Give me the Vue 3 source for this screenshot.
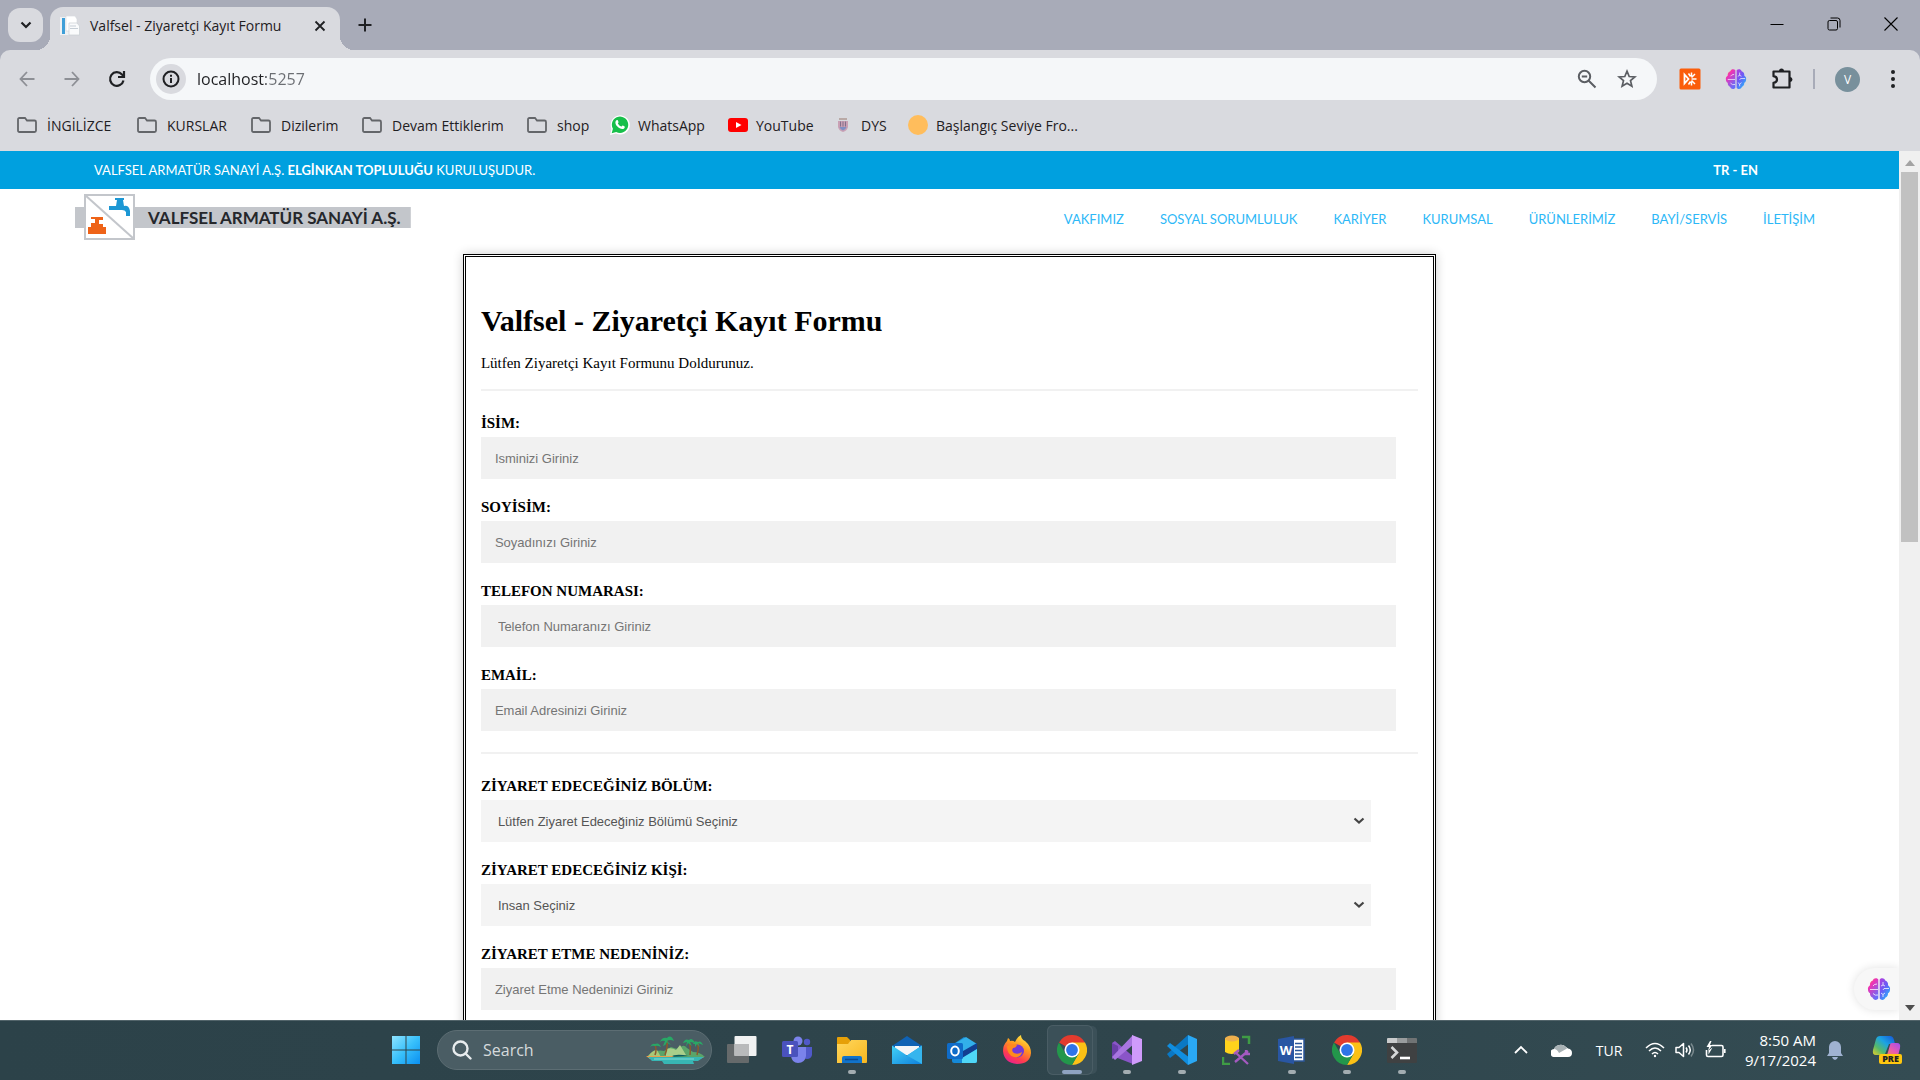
<script setup>
import { ref } from 'vue'

const url = ref('localhost:5257')

const bookmarks = [
  { label: 'İNGİLİZCE', icon: 'folder', width: 120 },
  { label: 'KURSLAR', icon: 'folder', width: 114 },
  { label: 'Dizilerim', icon: 'folder', width: 111 },
  { label: 'Devam Ettiklerim', icon: 'folder', width: 165 },
  { label: 'shop', icon: 'folder', width: 83 },
  { label: 'WhatsApp', icon: 'whatsapp', width: 118 },
  { label: 'YouTube', icon: 'youtube', width: 105 },
  { label: 'DYS', icon: 'crest', width: 75 },
  { label: 'Başlangıç Seviye Fro...', icon: 'dot', width: 180 },
]

const nav = ['VAKFIMIZ', 'SOSYAL SORUMLULUK', 'KARİYER', 'KURUMSAL', 'ÜRÜNLERİMİZ', 'BAYİ/SERVİS', 'İLETİŞİM']

const personal = [
  { id: 'isim', label: 'İSİM:', hint: 'Isminizi Giriniz', type: 'text' },
  { id: 'soyisim', label: 'SOYİSİM:', hint: 'Soyadınızı Giriniz', type: 'text' },
  { id: 'telefon', label: 'TELEFON NUMARASI:', hint: 'Telefon Numaranızı Giriniz', type: 'tel' },
  { id: 'email', label: 'EMAİL:', hint: 'Email Adresinizi Giriniz', type: 'email' },
]

const choices = [
  { id: 'bolum', label: 'ZİYARET EDECEĞİNİZ BÖLÜM:', hint: 'Lütfen Ziyaret Edeceğiniz Bölümü Seçiniz' },
  { id: 'kisi', label: 'ZİYARET EDECEĞİNİZ KİŞİ:', hint: 'Insan Seçiniz' },
]

const apps = [
  { name: 'Task view', icon: 'taskview' },
  { name: 'Teams', icon: 'teams' },
  { name: 'File Explorer', icon: 'explorer', open: true },
  { name: 'Mail', icon: 'mail' },
  { name: 'Outlook', icon: 'outlook' },
  { name: 'Firefox', icon: 'firefox' },
  { name: 'Chrome', icon: 'chrome', open: true, active: true },
  { name: 'Visual Studio', icon: 'vs', open: true },
  { name: 'Visual Studio Code', icon: 'vscode', open: true },
  { name: 'SQL Server Management Studio', icon: 'ssms' },
  { name: 'Word', icon: 'word', open: true },
  { name: 'Chrome 2', icon: 'chrome', open: true },
  { name: 'Terminal', icon: 'terminal', open: true },
]
</script>

<template>
  <div class="desktop">
    <svg class="sprite" aria-hidden="true">
      <defs>
        <linearGradient id="brainL" x1="0" y1="0" x2="0.6" y2="1">
          <stop offset="0" stop-color="#fb9a28" /><stop offset="0.35" stop-color="#f032b4" /><stop offset="1" stop-color="#6a6cf8" />
        </linearGradient>
        <linearGradient id="brainR" x1="0" y1="0" x2="0.7" y2="1">
          <stop offset="0" stop-color="#b63ddc" /><stop offset="0.5" stop-color="#6a5cf6" /><stop offset="1" stop-color="#27b4fb" />
        </linearGradient>
        <linearGradient id="win" x1="0" y1="0" x2="1" y2="1">
          <stop offset="0" stop-color="#8fe4ff" /><stop offset="0.5" stop-color="#38c0fb" /><stop offset="1" stop-color="#0a8ff0" />
        </linearGradient>
        <linearGradient id="folderG" x1="0" y1="0" x2="1" y2="1">
          <stop offset="0" stop-color="#ffd75e" /><stop offset="1" stop-color="#f9b71e" />
        </linearGradient>
        <linearGradient id="fire" x1="0.8" y1="0" x2="0.3" y2="1">
          <stop offset="0" stop-color="#fff04a" /><stop offset="0.4" stop-color="#ff9a1f" /><stop offset="0.75" stop-color="#ff3d4f" /><stop offset="1" stop-color="#e8208f" />
        </linearGradient>
        <linearGradient id="copA" x1="1" y1="0" x2="0" y2="1">
          <stop offset="0" stop-color="#1551d8" /><stop offset="0.4" stop-color="#1ba3e4" /><stop offset="0.7" stop-color="#55b96a" /><stop offset="1" stop-color="#e8cf2a" />
        </linearGradient>
        <linearGradient id="copB" x1="1" y1="0" x2="0" y2="1">
          <stop offset="0" stop-color="#a04df0" /><stop offset="0.5" stop-color="#e85bb0" /><stop offset="1" stop-color="#ff8a50" />
        </linearGradient>
        <linearGradient id="mailG" x1="0" y1="0" x2="1" y2="1">
          <stop offset="0" stop-color="#42d2f7" /><stop offset="1" stop-color="#0f80dc" />
        </linearGradient>
      </defs>
      <symbol id="brain" viewBox="0 0 24 24">
        <path fill="url(#brainL)" d="M11.3 2.5C10 .8 6.500.9 5.800 3.600 3.500 4.200 2.600 6.500 3 8.300 1.300 9.500.600 11 1 12.700 1 14.500 2 15.500 3 16.200 2.800 18.500 4 20 5.500 20.500 6.500 23.500 10 23.500 11.300 21.500Z" />
        <path fill="url(#brainR)" d="M12.700 2.500C14 .8 17.500.9 18.200 3.600 20.500 4.200 21.400 6.500 21 8.300 22.700 9.500 23.400 11 23 12.700 23 14.500 22 15.500 21 16.200 21.200 18.500 20 20 18.500 20.500 17.500 23.500 14 23.500 12.700 21.500Z" />
        <path fill="none" stroke="#fff" stroke-opacity=".75" stroke-width="1" d="M6 9q1-2 4-2M3 12.500h8M6 16.500q2 2.500 5 1.500M16 5v3l-2 1M16 8l2 1M22 11.500h-5l-1 1.500M14 16l2 1.500 2-1.500M16 17.500v2.500" />
      </symbol>
    </svg>

    <!-- Browser frame -->
    <header class="browser">
      <div class="tabstrip">
        <button class="tabsearch" aria-label="Search tabs">
          <svg width="14" height="14" viewBox="0 0 14 14"><path d="M2.500 4.500 7 9l4.500-4.500" fill="none" stroke="#1f2023" stroke-width="2.200" /></svg>
        </button>
        <div class="tab">
          <svg width="20" height="20" viewBox="0 0 20 20">
            <path d="M0 1h14v18H0z" fill="#eef1f4" /><path d="M2 2h3v16H2z" fill="#3f9fd8" />
            <path d="M6 0h9l2 3v12H6z" fill="#fff" stroke="#d3d7db" stroke-width=".6" />
            <path d="M9 7h8l2.500 3v9H9z" fill="#fafbfc" stroke="#c9ced3" stroke-width=".7" />
            <path d="M10 10h6M10 12.500h8" stroke="#b9c3cb" stroke-width=".8" />
          </svg>
          <span class="tabtitle">Valfsel - Ziyaretçi Kayıt Formu</span>
          <button class="icon tabclose" aria-label="Close tab">
            <svg width="12" height="12" viewBox="0 0 12 12"><path d="m1.500 1.500 9 9m0-9-9 9" stroke="#1f2023" stroke-width="1.800" /></svg>
          </button>
        </div>
        <button class="icon newtab" aria-label="New tab">
          <svg width="14" height="14" viewBox="0 0 14 14"><path d="M7 .500v13M.500 7h13" stroke="#1f2023" stroke-width="2" /></svg>
        </button>
        <div class="winctl">
          <button class="icon" aria-label="Minimize"><svg width="14" height="14"><path d="M.500 7.500h13" stroke="#000" /></svg></button>
          <button class="icon" aria-label="Restore">
            <svg width="14" height="14" fill="none" stroke="#000"><rect x="1" y="3.500" width="9.500" height="9.500" rx="1.500" /><path d="M3.500 1h7q2.500 0 2.500 2.500v7" /></svg>
          </button>
          <button class="icon" aria-label="Close"><svg width="14" height="14"><path d="m.500.500 13 13m0-13-13 13" stroke="#000" stroke-width="1.100" /></svg></button>
        </div>
      </div>

      <div class="toolbar">
        <div class="navbtns">
          <button class="icon" aria-label="Back"><svg width="16" height="16" fill="none" stroke="#8d8f95" stroke-width="1.800"><path d="M15.500 8H1.500M8 1 1.500 8 8 15" /></svg></button>
          <button class="icon" aria-label="Forward"><svg width="16" height="16" fill="none" stroke="#8d8f95" stroke-width="1.800"><path d="M.500 8h14M8 1l6.500 7L8 15" /></svg></button>
          <button class="icon" aria-label="Reload">
            <svg width="18" height="18" fill="none" stroke="#1f2023" stroke-width="2.200"><path d="M15.500 10.500A6.800 6.800 0 1 1 14 4.500L15.500 6" /><path d="M16 1v6h-6" /></svg>
          </button>
        </div>
        <div class="omnibox">
          <button class="icon info" aria-label="Site information">
            <svg width="18" height="18" fill="none" stroke="#1f2023" stroke-width="2"><circle cx="9" cy="9" r="7.500" /><path d="M9 8v5M9 4.800v2" /></svg>
          </button>
          <input v-model="url" class="url" type="text" aria-label="Address" />
          <button class="icon" aria-label="Zoom">
            <svg width="20" height="20" fill="none" stroke="#5b5e63" stroke-width="2"><circle cx="7.500" cy="7.500" r="5.700" /><path d="m11.500 11.500 7 7M4.800 7.500h5.400" /></svg>
          </button>
          <button class="icon" aria-label="Bookmark this page">
            <svg width="20" height="20" viewBox="0 0 20 20" fill="none" stroke="#5b5e63" stroke-width="1.700"><path d="m10 2.200 2.200 5.300 5.700.400-4.400 3.700 1.400 5.600-4.900-3-4.900 3 1.400-5.600L2.100 7.900l5.700-.400Z" /></svg>
          </button>
        </div>
        <div class="extensions">
          <button class="icon" aria-label="Recorder">
            <svg width="22" height="22" viewBox="0 0 22 22"><rect x=".500" y=".500" width="21" height="21" rx="1.500" fill="#fb5d0b" /><g fill="none" stroke="#fff"><path d="M5.500 6.500v9l4-4.500Z" stroke-width="1.800" /><path d="m9.500 5.500 2 3M9.500 16.500l2-3M12.500 11h5M12.500 9.500 16 6M12.500 12.500 16 16M12.500 4.500v4M12.500 13.500v4" stroke-width="1.500" /></g></svg>
          </button>
          <button class="icon" aria-label="Assistant"><svg width="22" height="22"><use href="#brain" /></svg></button>
          <button class="icon" aria-label="Extensions">
            <svg width="22" height="22" viewBox="0 0 22 22"><path d="M2.500 3.500h16v16h-16v-4.700q3.500-.400 3.500-3.300t-3.500-3.300Z" fill="none" stroke="#1f2023" stroke-width="2.200" stroke-linejoin="round" /><path d="M8 3a2.500 2.500 0 0 1 5 0ZM19 9a2.500 2.500 0 0 1 0 5Z" fill="#1f2023" /></svg>
          </button>
          <span class="sep"></span>
          <button class="avatar">V</button>
          <button class="icon more" aria-label="Menu"><svg width="6" height="20" fill="#1f2023"><circle cx="3" cy="3" r="2" /><circle cx="3" cy="10" r="2" /><circle cx="3" cy="17" r="2" /></svg></button>
        </div>
      </div>

      <nav class="bookmarks" aria-label="Bookmarks">
        <a v-for="b in bookmarks" :key="b.label" href="#" :class="b.icon" :style="{ width: b.width + 'px' }">
          <svg v-if="b.icon === 'folder'" width="20" height="16" fill="none" stroke="#636569" stroke-width="1.800"><path d="M1 2.500q0-1.500 1.500-1.500H8l2 2.500h7.500q1.500 0 1.500 1.500v8.500q0 1.500-1.500 1.500h-15Q1 15 1 13.500Z" /></svg>
          <svg v-else-if="b.icon === 'whatsapp'" width="20" height="20" viewBox="0 0 20 20"><path d="M0 20 1.500 14A9.600 9.600 0 1 1 6 18.600Z" fill="#fff" /><path d="m1.700 18.300 1.200-4.500a8.200 8.200 0 1 1 3.300 3.200Z" fill="#17bf4a" /><path d="M6.500 5.200c1.200-.700 1.500 0 2 1.800.200.700-.900 1.200-.600 1.600.900 1.700 2 2.500 3.300 3 .600.200 1-1.400 1.600-1.100 1.900.9 2.200 1.100 1.900 1.900-1 3-5.300 1.400-7.300-.800C5.300 9.500 4.700 6.500 6.500 5.200Z" fill="#fff" /></svg>
          <svg v-else-if="b.icon === 'youtube'" width="20" height="14"><rect width="20" height="14" rx="3" fill="#f00" /><path d="m8 4 5.500 3L8 10Z" fill="#fff" /></svg>
          <svg v-else-if="b.icon === 'crest'" width="20" height="14" viewBox="-5 0 20 14"><path d="M0 3h10v6q-1 4-5 5-4-1-5-5Z" fill="#c9a0b4" /><path d="M1.500 9h7q-1 3-3.500 3.500Q2.500 12 1.500 9Z" fill="#7f8fc4" /><path d="M1 0h8v2H1z" fill="#b9a9a6" /><path d="M2.500 3.500v5M5 3.500v5M7.500 3.500v5" stroke="#84708c" /></svg>
          <svg v-else width="20" height="20"><circle cx="10" cy="10" r="10" fill="#ffbd5c" /></svg>
          <span>{{ b.label }}</span>
        </a>
      </nav>
    </header>

    <!-- Web page -->
    <div class="viewport">
      <div class="page">
        <div class="topbar">
          <p>VALFSEL ARMATÜR SANAYİ A.Ş. <b>ELGİNKAN TOPLULUĞU</b> KURULUŞUDUR.</p>
          <p class="lang"><a href="#">TR</a> - <a href="#">EN</a></p>
        </div>
        <div class="masthead">
          <a class="logo" href="#">
            <svg width="51" height="46" viewBox="0 0 51 46">
              <rect x="1" y="1" width="49" height="44" fill="#fff" stroke="#c3c6cb" stroke-width="2" />
              <path d="m1 1 49 44" stroke="#c3c6cb" stroke-width="2" />
              <path d="M31 4h9v2h-1l1 6q5-1 6 5v5h-4v-4q-1-2-4-2H25v-4h7l1-6h-2Z" fill="#1c97d4" />
              <path d="M7 23h12v3h-4v4h4v3h3v7H4v-7h3v-4h4v-4H7Z" fill="#ee6318" />
            </svg>
            <span>VALFSEL ARMATÜR SANAYİ A.Ş.</span>
          </a>
          <nav class="menu" aria-label="Site">
            <a v-for="n in nav" :key="n" href="#">{{ n }}</a>
          </nav>
        </div>

        <form class="card" @submit.prevent>
          <h1>Valfsel - Ziyaretçi Kayıt Formu</h1>
          <p class="lead">Lütfen Ziyaretçi Kayıt Formunu Doldurunuz.</p>
          <hr />
          <div v-for="f in personal" :key="f.id" class="field">
            <label :for="f.id">{{ f.label }}</label>
            <input :id="f.id" :type="f.type" :placeholder="f.hint" />
          </div>
          <hr />
          <div v-for="f in choices" :key="f.id" class="field">
            <label :for="f.id">{{ f.label }}</label>
            <div class="pick">
              <select :id="f.id"><option>{{ f.hint }}</option></select>
              <svg width="12" height="8" viewBox="0 0 12 8"><path d="m1.500 1.500 4.500 4 4.500-4" fill="none" stroke="#444" stroke-width="2.200" /></svg>
            </div>
          </div>
          <div class="field">
            <label for="neden">ZİYARET ETME NEDENİNİZ:</label>
            <input id="neden" type="text" placeholder="Ziyaret Etme Nedeninizi Giriniz" />
          </div>
        </form>
        <button class="helper" aria-label="Open assistant"><svg width="24" height="24"><use href="#brain" /></svg></button>
      </div>
      <div class="scrollbar" aria-hidden="true">
        <svg width="10" height="6"><path d="m0 6 5-6 5 6Z" fill="#a3a3a3" /></svg>
        <div class="track"><div class="thumb"></div></div>
        <svg width="10" height="6"><path d="m0 0 5 6 5-6Z" fill="#4d4d4d" /></svg>
      </div>
    </div>

    <!-- Taskbar -->
    <footer class="taskbar">
      <div class="dock">
        <button class="app" aria-label="Start">
          <svg width="30" height="30"><path fill="url(#win)" d="M1 1h13.500v13.500H1zM15.500 1H29v13.500H15.500zM1 15.500h13.500V29H1zM15.500 15.500H29V29H15.500z" /></svg>
        </button>
        <label class="search">
          <svg width="20" height="20" fill="none" stroke="#e8ecee" stroke-width="2.400"><circle cx="8.500" cy="8.500" r="7" /><path d="m13.500 13.500 5 5" stroke-linecap="round" /></svg>
          <input type="search" placeholder="Search" aria-label="Search" />
          <svg width="60" height="30" viewBox="0 0 60 30">
            <path d="M1 22q8-8 17-6l7-4q5 2 8 2 4-6 8-1l6 4q7 0 12 5Z" fill="#5aa469" />
            <path d="M3 20q4-5 8-5l4 7H1Z" fill="#a8c878" /><path d="M20 14q6-2 10 1l4-5 6 10-20 2Z" fill="#a9cf8b" />
            <path d="M24 22q6-4 18-1Z" fill="#0e5c60" />
            <path d="M0 21h26l2 1h30l-4 2H4Z" fill="#e8a04c" /><path d="M2 22h56l-6 4h-5l1 3H18l-2-3H6Z" fill="#38b6b4" /><path d="M8 24h40" stroke="#82dcd6" />
            <path d="M9 20q2-5 0-10M19 20q3-8 2-15M44 20q1-8-1-14M51 20q2-6 1-12" fill="none" stroke="#8c5a2b" stroke-width="1.500" />
            <path d="M4 12q2-4 5-3 4-2 6 3-4-2-6-1-3-1-5 1ZM14 7q2-5 7-4 4-4 7 3-4-2-7 0l4 4q-3-1-4-3-1 3-4 4l2-5q-3-1-5 1ZM37 8q2-5 6-3 3-3 6 3l-5-1 2 4-4-3-2 4 1-5ZM47 9q1-4 5-2 3-2 5 3l-5-2 2 4-3-3-2 3v-3Z" fill="#28a866" />
          </svg>
        </label>
        <button v-for="a in apps" :key="a.name" class="app" :class="{ open: a.open, active: a.active }" :aria-label="a.name">
          <svg width="30" height="30" viewBox="0 0 30 30">
            <template v-if="a.icon === 'taskview'">
              <rect y="9" width="22" height="19" rx="1" fill="#666a6b" /><rect x="7.500" y="1" width="22" height="20" rx="1" fill="#f1f2f2" /><path d="M7.500 9H22v12H7.500z" fill="#b9babb" />
            </template>
            <template v-else-if="a.icon === 'teams'">
              <circle cx="16" cy="6" r="4.500" fill="#7b83eb" /><circle cx="25" cy="7" r="3.200" fill="#5059c9" /><path d="M21 12h9v8q-1 4-5 4-3 0-4-3Z" fill="#5059c9" /><path d="M9 12h15v9q-1 7-8 7-6 0-7-7Z" fill="#7b83eb" /><rect y="6" width="16" height="16" rx="1.500" fill="#4a52bd" />
              <text x="8" y="18.500" class="glyph" font-size="12" text-anchor="middle">T</text>
            </template>
            <template v-else-if="a.icon === 'explorer'">
              <path d="M0 3q0-1 1-1h9l3 3v6H0Z" fill="#e6a008" /><path d="M0 9h11l3-4h15q1 0 1 1v21q0 1-1 1H0Z" fill="url(#folderG)" /><path d="M5 28v-5q0-2 2-2h16q2 0 2 2v5Z" fill="#1273c9" /><path d="M8 24.500h13" stroke="#0b4a90" stroke-width="1.500" />
            </template>
            <template v-else-if="a.icon === 'mail'">
              <path d="m0 11 15-10 15 10v8H0Z" fill="#0f62b4" /><path d="M3 11h24v9H3z" fill="#f3f5f7" /><path d="m0 10.500 15 10 15-10V29H0Z" fill="url(#mailG)" /><path d="m15 20.500 15-10V29Z" fill="#35b5ee" />
            </template>
            <template v-else-if="a.icon === 'outlook'">
              <path d="m5 10 12-8 13 8v16q0 2-2 2H7q-2 0-2-2Z" fill="#1589d8" /><path d="M9 8 19 2l11 7-14 8Z" fill="#32b0ea" /><path d="m16 16 14-8v6L16 23Z" fill="#123f91" /><path d="m30 14-15 9v5h13q2 0 2-2Z" fill="#4fd7f7" /><rect y="8" width="16" height="16" rx="1.500" fill="#0f6cc9" />
              <ellipse cx="8" cy="16" rx="3.800" ry="4.500" fill="none" stroke="#fff" stroke-width="2" />
            </template>
            <template v-else-if="a.icon === 'firefox'">
              <path d="M19 0q0 4 4 6 6 5 6 12-1 11-14 11Q2 28 1 16 1 10 5 6l1-3q2 1 2 3 3-1 5 1 2-5 6-7Z" fill="url(#fire)" /><circle cx="15.500" cy="16" r="6.500" fill="#7339d8" /><path d="M5 11q5-3 10-1-1 3-4 3-2 3 1 5 4 2 8-1-1 6-8 5-7-2-7-11Z" fill="#ff8a1d" />
            </template>
            <template v-else-if="a.icon === 'chrome'">
              <path d="M15 15 2 7.500A15 15 0 0 1 28 7.500Z" fill="#e33b2e" /><path d="M15 15V7.500h13A15 15 0 0 1 15 30l6.500-11.200Z" fill="#fbc116" /><path d="M15 15l6.500 3.700L15 30A15 15 0 0 1 2 7.500l6.500 11.300Z" fill="#23974b" /><circle cx="15" cy="15" r="7.500" fill="#fff" /><circle cx="15" cy="15" r="5.900" fill="#2f74e8" />
            </template>
            <template v-else-if="a.icon === 'vs'">
              <path d="M0 8 3 6l20 17-2 6L3 22l-3 2Z" fill="#8a55c8" /><path d="M0 8 6 11v9l-6 3Z" fill="#6a3fa8" /><path d="M21 0 0 22l3 3L22 9Z" fill="#a875e0" /><path d="m20 0 10 4v22l-10 4Z" fill="#cf9bfb" />
            </template>
            <template v-else-if="a.icon === 'vscode'">
              <path d="m0 19 21-19 2 8L3 23Z" fill="#0a78c4" /><path d="m0 11 3-3 20 15-2 7Z" fill="#108ee0" /><path d="m21 0 9 4v22l-9 4Z" fill="#2aa8f4" />
            </template>
            <template v-else-if="a.icon === 'ssms'">
              <path d="M3 3v14q6 4 14 0V3Z" fill="#ffd21c" /><ellipse cx="10" cy="3.500" rx="7" ry="3" fill="#eeb04d" /><path d="M20 2h7v7M1 22v7h7" fill="none" stroke="#3f9c45" stroke-width="2.500" /><path d="m13 27 13-11M13 17l13 12M12 19l5-4M24 15v4h4" fill="none" stroke="#a45ac0" stroke-width="2.300" />
            </template>
            <template v-else-if="a.icon === 'word'">
              <path d="M15 4h12v22H15z" fill="#fff" stroke="#2b579a" stroke-width="1.500" /><path d="M18 8.500h7M18 12h7M18 15.500h7M18 19h7M18 22.500h7" stroke="#2b579a" stroke-width="1.500" /><path d="m1 4 16-3v28L1 26Z" fill="#2956a3" />
              <text x="9" y="20" class="glyph" font-size="13" text-anchor="middle">W</text>
            </template>
            <template v-else>
              <rect y="3" width="30" height="25" rx="1.500" fill="#3f4142" /><path d="M0 8V4q0-1 1-1h9v5Z" fill="#c9cbcc" /><path d="M10 3h10v5H10z" fill="#999c9d" /><path d="M20 3h9q1 0 1 1v4H20z" fill="#707374" /><path d="m4.500 12 5.500 5.500L4.500 23" fill="none" stroke="#d6d8d9" stroke-width="2.600" /><path d="M13 23h10" stroke="#fff" stroke-width="2.600" />
            </template>
          </svg>
        </button>
      </div>
      <div class="tray">
        <button class="icon t-up" aria-label="Show hidden icons"><svg width="14" height="10"><path d="m1 8 6-6 6 6" fill="none" stroke="#fff" stroke-width="1.800" /></svg></button>
        <button class="icon t-cloud" aria-label="OneDrive"><svg width="21" height="14" viewBox="0 0 21 14"><path d="M4 14a4 4 0 0 1-1-8 7 6 0 0 1 12-2l2 1.500q4 .500 4 4.500t-4 4Z" fill="#fff" /><path d="M3 6a7 6 0 0 1 12-2l1 1.500-8 4.500Q6 6 3 6Z" fill="#a9b2b5" /></svg></button>
        <button class="icon t-lang">TUR</button>
        <button class="icon t-status" aria-label="Network, sound, battery">
          <svg width="20" height="16" viewBox="0 0 20 16" fill="none" stroke="#fff" stroke-width="1.500"><path d="M1 6q9-9 18 0M4 9q6-6 12 0M7 12q3-3 6 0" /><circle cx="10" cy="14" r="1.200" fill="#fff" stroke="none" /></svg>
          <svg width="20" height="16" viewBox="0 0 20 16" fill="none" stroke="#fff" stroke-width="1.500"><path d="M1 5.500h3L8.500 1.500v13L4 10.500H1Z" stroke-linejoin="round" /><path d="M11 5.500q2 2.500 0 5M13.500 3.500q3.500 4.500 0 9" /><path d="M16 1.500q5 6.500 0 13" opacity=".35" /></svg>
          <svg width="21" height="18" viewBox="0 0 21 18" fill="none" stroke="#fff" stroke-width="1.600"><path d="M7 4.500h9.500q1.500 0 1.500 1.500v8q0 1.500-1.500 1.500H3Q1.500 15.500 1.500 14V9M19.800 8v4" /><path d="m5 0-3.500 6H4L3 10l4.500-6H5L6.500 0Z" fill="#fff" stroke="none" /><path d="M3.500 13.500v-4l4-3Z" fill="#fff" stroke="none" /></svg>
        </button>
        <div class="clock"><span>8:50 AM</span><span>9/17/2024</span></div>
        <button class="icon t-bell" aria-label="Notifications"><svg width="18" height="20" viewBox="0 0 18 20"><path d="M3 13V7a6 6 0 0 1 12 0v6l2 3H1ZM6 17h6q-1 3-3 3t-3-3Z" fill="#9fb2d1" /></svg></button>
        <button class="icon t-copilot" aria-label="Copilot">
          <svg width="30" height="30" viewBox="0 0 30 30"><path d="M8 1h10q3 0 4 4l1 4h-6l-4 10q-1 1-3 1H4q-4 0-3-5L4 4q1-3 4-3Z" fill="url(#copA)" /><path d="M20 8h5q4 0 3 5l-2 8H12q3 0 4-4l2-7q0-2 2-2Z" fill="url(#copB)" /><rect x="7" y="19" width="23" height="10" rx="2" fill="#ffc70f" /><text x="18.500" y="27" font-size="9" class="pre" text-anchor="middle">PRE</text></svg>
        </button>
      </div>
    </footer>
  </div>
</template>

<style>
body {
  margin: 0;
}
</style>

<style scoped>
.desktop {
  display: flex;
  flex-direction: column;
  height: 100vh;
  overflow: hidden;
  background: #fff;
  font-family: "Open Sans", "Noto Sans", sans-serif;
}
.sprite {
  position: absolute;
  width: 0;
  height: 0;
}
button {
  font: inherit;
  border: 0;
  padding: 0;
  background: none;
}
.icon {
  display: flex;
  align-items: center;
  justify-content: center;
}
a {
  color: inherit;
  text-decoration: none;
}
svg {
  display: block;
  flex: none;
}

/* Browser frame */
.browser {
  flex: none;
  background: #a8abb8;
  color: #1f2023;
}
.tabstrip {
  display: flex;
  height: 50px;
}
.tabsearch {
  display: flex;
  align-items: center;
  justify-content: center;
  width: 35px;
  height: 34px;
  margin: 8px 7px 0 8px;
  border-radius: 12px;
  background: #d9dadf;
}
.tab {
  position: relative;
  display: flex;
  align-items: center;
  box-sizing: border-box;
  width: 290px;
  margin-top: 7px;
  padding: 0 12px 6px 10px;
  border-radius: 13px 13px 0 0;
  background: #d9dadf;
}
.tab::before,
.tab::after {
  content: "";
  position: absolute;
  bottom: 0;
  width: 14px;
  height: 14px;
}
.tab::before {
  right: 100%;
  background: radial-gradient(circle at 0 0, transparent 14px, #d9dadf 14px);
}
.tab::after {
  left: 100%;
  background: radial-gradient(circle at 100% 0, transparent 14px, #d9dadf 14px);
}
.tabtitle {
  flex: 1;
  margin-left: 10px;
  font-size: 14px;
  white-space: nowrap;
}
.tabclose {
  width: 16px;
  height: 16px;
}
.newtab {
  width: 50px;
}
.winctl {
  display: flex;
  margin-left: auto;
  padding-right: 1px;
}
.winctl .icon {
  width: 57px;
  height: 48px;
}
.toolbar {
  display: flex;
  align-items: center;
  height: 58px;
  border-radius: 10px 10px 0 0;
  background: #d9dadf;
}
.navbtns {
  display: flex;
  width: 150px;
  padding-left: 4px;
  box-sizing: border-box;
}
.navbtns .icon {
  width: 45px;
}
.omnibox {
  display: flex;
  align-items: center;
  flex: 1;
  height: 42px;
  padding: 0 10px 0 6px;
  border-radius: 21px;
  background: #f5f7f9;
}
.omnibox .icon {
  width: 40px;
}
.omnibox .info {
  width: 30px;
  height: 30px;
  border-radius: 50%;
  background: #d9dadf;
}
.url {
  flex: 1;
  margin-left: 11px;
  padding: 0;
  border: 0;
  outline: 0;
  font: 16px "Open Sans", "Noto Sans", sans-serif;
  color: transparent;
  background: linear-gradient(to right, #1f2023 69px, #6b6e73 69px);
  background-clip: text;
}
.extensions {
  display: flex;
  align-items: center;
  box-sizing: border-box;
  width: 263px;
  padding-left: 10px;
}
.extensions .icon {
  width: 46px;
}
.extensions .more {
  margin-left: 10px;
}
.sep {
  width: 2px;
  height: 20px;
  margin: 0 20px 0 8px;
  background: #a8abb8;
}
.avatar {
  width: 25px;
  height: 25px;
  border-radius: 50%;
  background: #78909c;
  color: #fff;
  font-size: 12px;
}
.bookmarks {
  display: flex;
  align-items: center;
  height: 34px;
  padding: 0 0 9px 17px;
  background: #d9dadf;
  font-size: 14px;
}
.bookmarks a {
  display: flex;
  align-items: center;
  gap: 8px;
  white-space: nowrap;
}
.bookmarks .folder {
  gap: 10px;
}

/* Web page */
.viewport {
  display: flex;
  flex: 1;
  min-height: 0;
}
.page {
  position: relative;
  flex: 1;
  overflow: hidden;
  font-family: "Liberation Serif", serif;
}
.topbar {
  display: flex;
  align-items: center;
  justify-content: space-between;
  height: 38px;
  padding: 0 141px 0 94px;
  background: #00a0df;
  color: #fff;
  font: 13px Lato, sans-serif;
}
.topbar p {
  margin: 0;
}
.topbar b,
.topbar .lang {
  font-weight: 700;
}
.masthead {
  display: flex;
  align-items: center;
  justify-content: space-between;
  height: 59px;
  padding: 0 84px 3px 75px;
  box-sizing: border-box;
}
.logo {
  display: flex;
  align-items: center;
  gap: 13px;
  padding: 0 10px 0 9px;
  background: linear-gradient(#c3c6cb, #c3c6cb) center / 100% 21px no-repeat;
  color: #25272b;
  font: 700 17px Lato, sans-serif;
}
.menu {
  display: flex;
  gap: 36px;
  padding-top: 4px;
  color: #2db8f7;
  font: 13px Lato, sans-serif;
}
.card {
  box-sizing: border-box;
  width: 51.25%;
  margin: 6px auto 0;
  padding: 42px 15px 60px;
  border: 3px double #000;
  box-shadow: 0 0 10px rgba(0, 0, 0, 0.2);
  color: #000;
}
h1 {
  margin: 0;
  font-size: 30px;
  line-height: 44px;
}
.lead {
  margin: 10px 0 16px;
  font-size: 15px;
  line-height: 20px;
}
hr {
  height: 2px;
  margin: 0;
  border: 0;
  background: #f1f1f1;
}
.field {
  margin: 19px 0;
}
hr + .field {
  margin-top: 23px;
}
.field + hr {
  margin-top: 21px;
}
.field label {
  display: block;
  margin-bottom: 5px;
  font-size: 15px;
  font-weight: bold;
  line-height: 18px;
}
.field input,
.field select {
  display: block;
  box-sizing: border-box;
  height: 42px;
  padding: 0 14px;
  border: 0;
  border-radius: 0;
  font: 13px "Liberation Sans", sans-serif;
}
.field input {
  width: 97.65%;
  background: #f1f1f1;
}
.field input::placeholder {
  color: #757575;
}
.field input[type="tel"] {
  padding-left: 17px;
}
.pick {
  position: relative;
  width: 95%;
}
.pick select {
  width: 100%;
  padding-left: 17px;
  appearance: none;
  background: #f4f4f4;
  color: #555;
}
.pick svg {
  position: absolute;
  right: 6px;
  top: 17px;
}
.helper {
  position: absolute;
  right: 0;
  bottom: 10px;
  display: flex;
  align-items: center;
  width: 45px;
  height: 42px;
  padding-left: 13px;
  border-radius: 21px 0 0 21px;
  background: #f7f7f7;
  box-shadow: 0 0 10px rgba(0, 0, 0, 0.12);
}
.scrollbar {
  display: flex;
  flex-direction: column;
  align-items: center;
  width: 21px;
  padding: 9px 0;
  box-sizing: border-box;
  background: #f0f0f0;
}
.track {
  flex: 1;
  margin: 6px 0;
}
.thumb {
  width: 17px;
  height: 44.7%;
  background: #c1c1c1;
}

/* Taskbar */
.taskbar {
  display: flex;
  align-items: center;
  flex: none;
  height: 60px;
  padding-left: 378px;
  background: linear-gradient(to right, #2c4249, #2f454c 60%, #344c53);
  box-shadow: inset 0 1px #52646a;
  color: #fff;
}
.dock {
  display: flex;
  align-items: center;
}
.app {
  position: relative;
  display: flex;
  align-items: center;
  justify-content: center;
  width: 55px;
  height: 50px;
}
.app svg {
  position: relative;
}
.open::after {
  content: "";
  position: absolute;
  bottom: 1px;
  left: 50%;
  width: 8px;
  height: 4px;
  margin-left: -4px;
  border-radius: 2px;
  background: #a3adb1;
}
.active::before {
  content: "";
  position: absolute;
  inset: 0 6px 0 3px;
  border-radius: 6px;
  background: #3b5058;
  box-shadow: inset 0 0 0 1px #4a5d65, 5px 0 0 -1px #3b5058;
}
.active::after {
  width: 20px;
  margin-left: -10px;
  background: #8fa3c1;
}
.search {
  display: flex;
  align-items: center;
  box-sizing: border-box;
  width: 275px;
  height: 40px;
  margin: 0 2px 0 4px;
  padding: 0 5px 0 14px;
  border: 1px solid #5c6d73;
  border-radius: 20px;
  background: #4a5d64;
}
.search input {
  flex: 1;
  min-width: 0;
  margin-left: 11px;
  padding: 0;
  border: 0;
  outline: 0;
  background: none;
  font: 16px "Open Sans", "Noto Sans", sans-serif;
}
.search input::placeholder {
  color: #d5dadc;
}
.glyph {
  fill: #fff;
  font-family: "Open Sans", sans-serif;
  font-weight: 700;
}
.pre {
  fill: #222;
  font-family: "Open Sans", sans-serif;
  font-weight: 800;
}
.tray {
  display: flex;
  align-items: center;
  margin-left: auto;
  padding-right: 18px;
  font-size: 14px;
}
.tray .icon {
  color: #fff;
  height: 40px;
}
.t-up {
  width: 40px;
}
.t-cloud {
  width: 40px;
}
.tray .t-lang {
  width: 56px;
  margin-right: 8px;
}
.t-status {
  gap: 10px;
}
.clock {
  display: flex;
  flex-direction: column;
  align-items: flex-end;
  width: 90px;
  font-size: 15px;
  line-height: 20px;
}
.t-bell {
  width: 38px;
}
.t-copilot {
  width: 30px;
  margin-left: 18px;
}
</style>
